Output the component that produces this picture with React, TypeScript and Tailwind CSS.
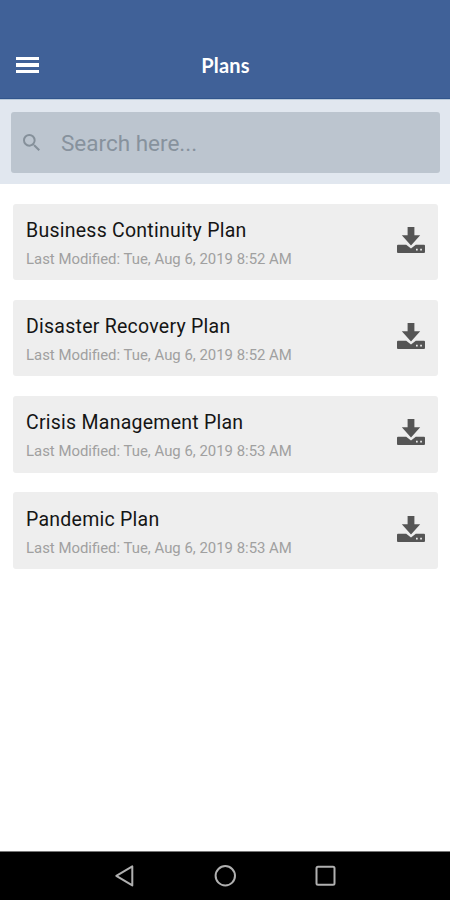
import React from 'react';

interface Plan {
    name: string;
    modified: string;
}

const plans: Plan[] = [
    { name: 'Business Continuity Plan', modified: 'Tue, Aug 6, 2019 8:52 AM' },
    { name: 'Disaster Recovery Plan', modified: 'Tue, Aug 6, 2019 8:52 AM' },
    { name: 'Crisis Management Plan', modified: 'Tue, Aug 6, 2019 8:53 AM' },
    { name: 'Pandemic Plan', modified: 'Tue, Aug 6, 2019 8:53 AM' },
];

const DownloadIcon: React.FC = () => (
    <svg className="w-7 h-[26px] mb-1 shrink-0" viewBox="0 0 28 26" fill="#555555">
        <path d="M10.6 0h6.8v8.2h5.8L14 18.4 4.8 8.2h5.8z" />
        <path
            fillRule="evenodd"
            d="M1 17.7h8.2l4.8 3.9 4.8-3.9H27a1 1 0 0 1 1 1V25a1 1 0 0 1-1 1H1a1 1 0 0 1-1-1v-6.3a1 1 0 0 1 1-1zM19 21.7v1.7h1.7v-1.7zM23.2 21.7v1.7h1.7v-1.7z"
        />
    </svg>
);

const Header: React.FC = () => (
    <header className="h-[99px] pt-8 bg-[#406198] border-b border-[#31558c] grid grid-cols-3 items-center">
        <button aria-label="Menu" className="ml-4 w-[23px] flex flex-col gap-[3px]">
            <span className="h-[3.5px] bg-white"></span>
            <span className="h-[3.5px] bg-white"></span>
            <span className="h-[3.5px] bg-white"></span>
        </button>
        <h1 className="pl-px font-['Lato',sans-serif] font-bold text-xl tracking-[0.2px] text-white text-center">Plans</h1>
    </header>
);

const SearchBar: React.FC = () => (
    <div className="h-[85px] pl-[11px] pr-[10px] pt-3 bg-[#e1e7ef] border-t border-[#b9c9da]">
        <div className="h-[61px] pl-3 flex items-center rounded-[3px] bg-[#bcc5cf]">
            <svg className="w-[17px] h-[17px]" viewBox="3 3 17.5 17.5" fill="#85909a">
                <path d="M15.5 14h-.79l-.28-.27A6.47 6.47 0 0 0 16 9.5 6.5 6.5 0 1 0 9.5 16c1.61 0 3.09-.59 4.23-1.57l.27.28v.79l5 4.99L20.49 19l-4.99-5zm-6 0C7.01 14 5 11.99 5 9.5S7.01 5 9.5 5 14 7.01 14 9.5 11.99 14 9.5 14z" />
            </svg>
            <span className="ml-[21px] pt-0.5 text-[22.5px] text-[#87929d]">Search here...</span>
        </div>
    </div>
);

const PlanCard: React.FC<{ plan: Plan }> = ({ plan }) => (
    <li className="h-[76.5px] pl-[13px] pr-[13px] flex items-center justify-between rounded-[3px] bg-[#eeeeee]">
        <div className="pt-1">
            <h2 className="text-[19.5px] leading-7 tracking-[0.25px] text-[#151515]">{plan.name}</h2>
            <p className="mt-0.5 text-[14.92px] leading-6 text-[#a0a0a0]">Last Modified: {plan.modified}</p>
        </div>
        <DownloadIcon />
    </li>
);

const NavBar: React.FC = () => (
    <nav className="h-[49px] bg-black border-t border-[#777777] flex items-center justify-center gap-[76px]">
        <svg className="w-6 h-6" viewBox="0 0 24 24" fill="none" stroke="#b0b0b0" strokeWidth="2" strokeLinejoin="round">
            <path d="M19.3 2.4v19L3.3 11.8z" />
        </svg>
        <svg className="w-6 h-6" viewBox="0 0 24 24" fill="none" stroke="#b0b0b0" strokeWidth="2">
            <circle cx="12.3" cy="11.8" r="9.7" />
        </svg>
        <svg className="w-6 h-6" viewBox="0 0 24 24" fill="none" stroke="#b0b0b0" strokeWidth="2">
            <rect x="3.5" y="2.8" width="18" height="18" rx="1.5" />
        </svg>
    </nav>
);

export default function App() {
    return (
        <div className="w-full h-screen flex flex-col bg-white font-['Roboto',sans-serif]">
            <Header />
            <SearchBar />
            <main className="flex-1 pl-[13px] pr-3 pt-[19.5px]">
                <ul className="flex flex-col gap-[19.8px]">
                    {plans.map((plan) => (
                        <PlanCard key={plan.name} plan={plan} />
                    ))}
                </ul>
            </main>
            <NavBar />
        </div>
    );
}
